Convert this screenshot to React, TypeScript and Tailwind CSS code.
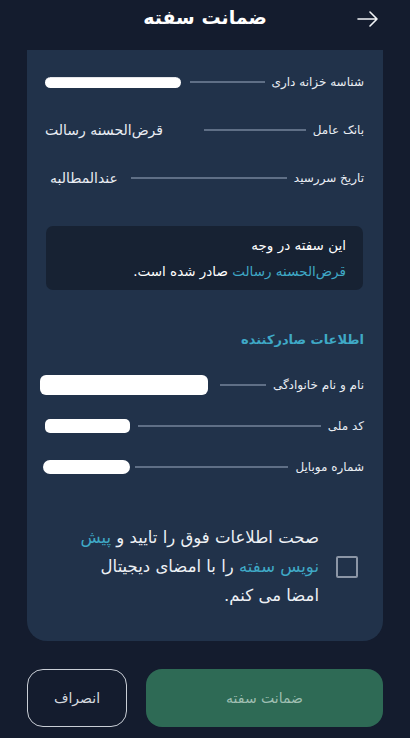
import React from "react";

const Line = ({ w }: { w: string }) => (
  <div className={`h-[2px] bg-[#5f6f86] ${w}`} />
);

export default function App() {
  return (
    <div
      dir="rtl"
      className="w-[410px] h-[738px] bg-[#141c2e] flex flex-col overflow-hidden"
      style={{ fontFamily: '"DejaVu Sans", "Noto Sans", sans-serif' }}
    >
      {/* header */}
      <div className="h-[50px] shrink-0 grid grid-cols-[60px_1fr_60px] items-center px-[30px]">
        <svg width="22" height="16" viewBox="0 0 22 16" className="justify-self-start -mt-[12px] ml-auto mr-[1px]">
          <path d="M1 8h19M13 1l7 7-7 7" fill="none" stroke="#f2f4f7" strokeWidth="1.6" strokeLinecap="round" strokeLinejoin="round" />
        </svg>
        <div className="text-center text-white font-bold text-[19px] -mt-[16px]">ضمانت سفته</div>
        <div />
      </div>

      {/* card */}
      <div className="mx-[27px] h-[591px] shrink-0 bg-[#21324a] rounded-b-[20px] pr-[19px] pl-[18px] flex flex-col text-[#e9edf3]">
        <div className="h-[32px]" />
        {/* row 1 */}
        <div className="flex items-center h-0">
          <span className="text-[12px] whitespace-nowrap">شناسه خزانه داری</span>
          <div className="mr-[7px]"><Line w="w-[75px]" /></div>
          <div className="mr-auto w-[136px] h-[11px] rounded-full bg-white border-t border-dotted border-[#c8ccd4]" />
        </div>
        <div className="h-[48px]" />
        {/* row 2 */}
        <div className="flex items-center h-0">
          <span className="text-[12px] whitespace-nowrap">بانک عامل</span>
          <div className="mr-[7px]"><Line w="w-[102px]" /></div>
          <span className="mr-auto text-[14px] whitespace-nowrap">قرض‌الحسنه رسالت</span>
        </div>
        <div className="h-[48px]" />
        {/* row 3 */}
        <div className="flex items-center h-0">
          <span className="text-[12px] whitespace-nowrap">تاریخ سررسید</span>
          <div className="mr-[7px]"><Line w="w-[156px]" /></div>
          <span className="mr-auto ml-[5px] text-[14px] whitespace-nowrap">عندالمطالبه</span>
        </div>

        {/* info box */}
        <div className="mt-[48px] h-[64px] mr-[1px] ml-[1px] rounded-[7px] bg-[#172233] pr-[17px] flex flex-col justify-center gap-[6px] text-[13.5px] text-white">
          <div>این سفته در وجه</div>
          <div>
            <span className="text-[#3fa9c6]">قرض‌الحسنه رسالت</span> صادر شده است.
          </div>
        </div>

        <div className="mt-[38px] text-[13px] font-bold text-[#3fa9c6] leading-[24px]">اطلاعات صادرکننده</div>

        <div className="h-[33px]" />
        {/* name */}
        <div className="flex items-center h-0">
          <span className="text-[12px] whitespace-nowrap">نام و نام خانوادگی</span>
          <div className="mr-[7px]"><Line w="w-[46px]" /></div>
          <div className="mr-auto -ml-[5px] w-[168px] h-[20px] rounded-[6px] bg-white" />
        </div>
        <div className="h-[41px]" />
        <div className="flex items-center h-0">
          <span className="text-[12px] whitespace-nowrap">کد ملی</span>
          <div className="mr-[7px]"><Line w="w-[183px]" /></div>
          <div className="mr-auto w-[85px] h-[14px] rounded-[5px] bg-white" />
        </div>
        <div className="h-[41px]" />
        <div className="flex items-center h-0">
          <span className="text-[12px] whitespace-nowrap">شماره موبایل</span>
          <div className="mr-[7px]"><Line w="w-[153px]" /></div>
          <div className="mr-auto -ml-[2px] w-[87px] h-[14px] rounded-full bg-white" />
        </div>

        {/* checkbox */}
        <div className="mt-[56px] flex items-center pr-[6px]">
          <div className="w-[22px] h-[22px] border-2 border-[#8c96a6] rounded-[2px] shrink-0" />
          <div className="mr-[17px] text-[16.5px] leading-[29px] text-[#eef1f5] whitespace-nowrap">
            <div>
              صحت اطلاعات فوق را تایید و <span className="text-[#3fa9c6]">پیش</span>
            </div>
            <div>
              <span className="text-[#3fa9c6]">نویس سفته</span> را با امضای دیجیتال
            </div>
            <div>امضا می کنم.</div>
          </div>
        </div>
      </div>

      {/* buttons */}
      <div className="mt-[28px] mx-[27px] flex gap-[19px] h-[58px]">
        <div className="flex-1 rounded-[16px] bg-[#2e6a55] flex items-center justify-center text-[#9fbfb2] text-[14px]">
          ضمانت سفته
        </div>
        <div className="w-[100px] rounded-[16px] border-[1.5px] border-[#c9ced6] flex items-center justify-center text-[#d5d9df] text-[14px]">
          انصراف
        </div>
      </div>
    </div>
  );
}
